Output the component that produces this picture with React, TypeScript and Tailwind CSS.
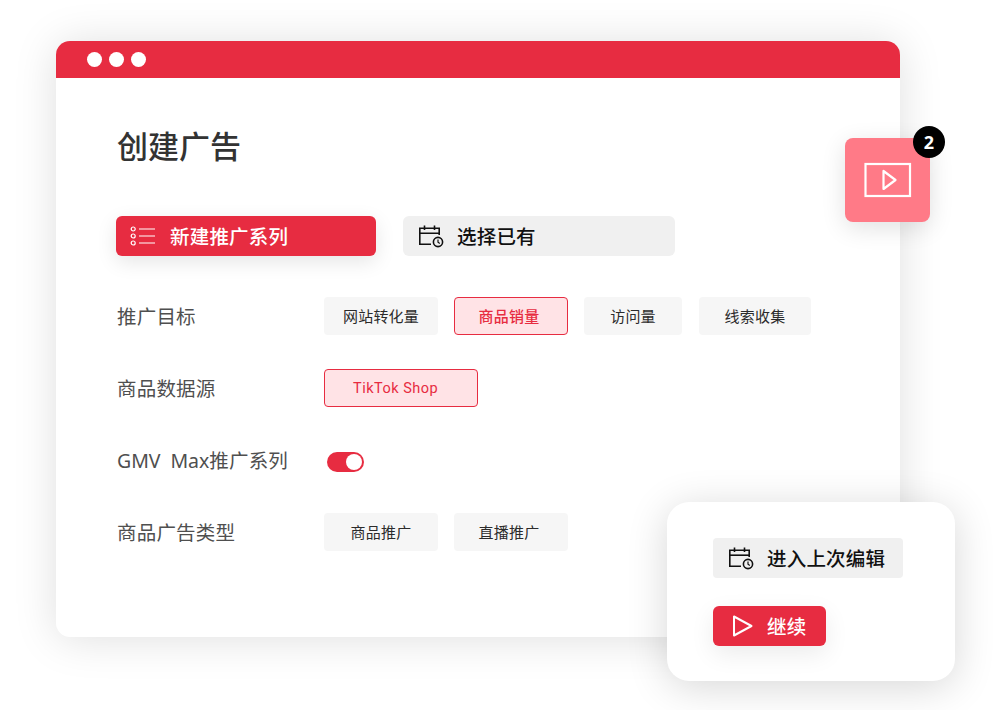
import React from 'react';

const fontStack = "font-['Noto_Sans','Noto_Sans_CJK_SC',sans-serif]";

const CalendarClock = () => (
  <svg width="26" height="24" viewBox="0 0 26 24" fill="none" stroke="#111" strokeWidth="1.6">
    <path d="M13 20.2H1.8V4.2H21.2V11" />
    <path d="M1.8 9.2H21.2" />
    <path d="M6.5 1.5V6M16.5 1.5V6" />
    <circle cx="20" cy="18" r="4.6" />
    <path d="M20 15.4V18.2L21.8 19.4" strokeWidth="1.2" />
  </svg>
);

const ListIcon = () => (
  <svg width="26" height="22" viewBox="0 0 26 22" fill="none" stroke="#fff" strokeWidth="1.2">
    <circle cx="3.2" cy="4" r="2" />
    <circle cx="3.2" cy="11" r="2" />
    <circle cx="3.2" cy="18" r="2" />
    <path d="M9 4H25M9 11H25M9 18H25" />
  </svg>
);

const Chip = ({ label, width, active }: { label: string; width: string; active?: boolean }) => (
  <div
    className={`flex h-[38px] items-center justify-center rounded-[4px] text-[15px] tracking-[0.2px] ${width} ${
      active
        ? 'border border-[#e72c41] bg-[#ffe3e6] pr-[4px] font-medium text-[#e72c41]'
        : 'bg-[#f6f6f6] text-[#2b2b2b]'
    }`}
  >
    {label}
  </div>
);

const FormRow = ({ label, children }: { label: React.ReactNode; children: React.ReactNode }) => (
  <div className="flex h-[38px] items-center">
    <div className="w-[208px] whitespace-pre pl-px pt-px text-[19.5px] tracking-[0.2px] text-[#4f4f4f]">{label}</div>
    {children}
  </div>
);

export default function App() {
  return (
    <div className={`relative h-[710px] w-[995px] overflow-hidden bg-white pl-[56px] pt-[41px] ${fontStack}`}>
      <div className="h-[596px] w-[844px] overflow-hidden rounded-[14px] bg-white shadow-[0_2px_44px_rgba(0,0,0,0.13)]">
        <div className="flex h-[37px] items-center gap-[7px] bg-[#e72c41] pl-[31px]">
          <span className="h-[15px] w-[15px] rounded-full bg-white" />
          <span className="h-[15px] w-[15px] rounded-full bg-white" />
          <span className="h-[15px] w-[15px] rounded-full bg-white" />
        </div>

        <div className="pl-[60px] pt-[46px]">
          <h1 className="pl-px text-[31px] leading-[44px] font-medium text-[#333333]">创建广告</h1>

          <div className="mt-[48px] flex gap-[27px]">
            <div className="flex h-[40px] w-[260px] items-center gap-[14px] rounded-[6px] bg-[#e72c41] pl-[14px] text-[19.5px] font-medium tracking-[0.2px] text-white shadow-[0_6px_20px_rgba(0,0,0,0.1)]">
              <ListIcon />
              <span className="pt-px">新建推广系列</span>
            </div>
            <div className="flex h-[40px] w-[272px] items-center gap-[13px] rounded-[6px] bg-[#f0f0f0] pl-[15px] text-[19.5px] font-medium tracking-[0.2px] text-[#111111]">
              <CalendarClock />
              <span className="pt-px">选择已有</span>
            </div>
          </div>

          <div className="mt-[41px] flex flex-col gap-[34px]">
            <FormRow label="推广目标">
              <div className="flex gap-[16px]">
                <Chip label="网站转化量" width="w-[114px]" />
                <Chip label="商品销量" width="w-[114px]" active />
                <Chip label="访问量" width="w-[98px]" />
                <div className="pl-px">
                  <Chip label="线索收集" width="w-[112px]" />
                </div>
              </div>
            </FormRow>
            <FormRow label="商品数据源">
              <div className="flex h-[38px] w-[154px] items-center rounded-[4px] border border-[#e72c41] bg-[#ffe3e6] pl-[28px] pt-px font-['Roboto',sans-serif] text-[14.5px] tracking-[0.5px] text-[#e72c41]">
                TikTok Shop
              </div>
            </FormRow>
            <FormRow label={<><span className="tracking-[-0.05px]">GMV  Max</span>推广系列</>}>
              <div className="ml-[3px] mt-[3px] flex h-[20px] w-[37px] items-center justify-end rounded-full bg-[#e72c41] pr-[2px]">
                <span className="h-[16px] w-[16px] rounded-full bg-white" />
              </div>
            </FormRow>
            <FormRow label="商品广告类型">
              <div className="flex gap-[16px]">
                <Chip label="商品推广" width="w-[114px]" />
                <div className="flex h-[38px] w-[114px] items-center justify-center rounded-[4px] bg-[#f6f6f6] pr-[4px] text-[15px] tracking-[0.2px] text-[#2b2b2b]">
                  直播推广
                </div>
              </div>
            </FormRow>
          </div>
        </div>
      </div>

      {/* floating video tile */}
      <div className="absolute left-[845px] top-[138px] flex h-[84px] w-[85px] items-center justify-center rounded-[8px] bg-[#ff7a87] shadow-[0_6px_24px_rgba(0,0,0,0.12)]">
        <svg width="48" height="36" viewBox="0 0 48 36" fill="none" stroke="#fff" strokeWidth="2.2">
          <rect x="1.5" y="2" width="44.5" height="32" />
          <path d="M19.5 9V27L31.5 18Z" strokeLinejoin="round" />
        </svg>
      </div>
      <div className="absolute left-[913px] top-[126px] flex h-[32px] w-[32px] items-center justify-center rounded-full bg-black text-[18px] font-bold text-white">
        2
      </div>

      {/* resume popup */}
      <div className="absolute left-[667px] top-[502px] h-[179px] w-[288px] rounded-[22px] bg-white pl-[46px] pt-[36px] shadow-[0_6px_40px_rgba(0,0,0,0.16)]">
        <div className="flex h-[40px] w-[190px] items-center gap-[13px] rounded-[4px] bg-[#f0f0f0] pl-[15px] text-[19.5px] font-medium tracking-[0.2px] text-[#111111]">
          <CalendarClock />
          <span className="pt-px">进入上次编辑</span>
        </div>
        <div className="mt-[28px] flex h-[40px] w-[113px] items-center gap-[13px] rounded-[6px] bg-[#e72c41] pl-[19px] text-[19.5px] font-medium tracking-[0.2px] text-white shadow-[0_8px_24px_rgba(0,0,0,0.08)]">
          <svg width="22" height="24" viewBox="0 0 22 24" fill="none" stroke="#fff" strokeWidth="2">
            <path d="M2 2.5V21.5L19.5 12Z" strokeLinejoin="round" />
          </svg>
          <span className="pt-px">继续</span>
        </div>
      </div>
    </div>
  );
}
